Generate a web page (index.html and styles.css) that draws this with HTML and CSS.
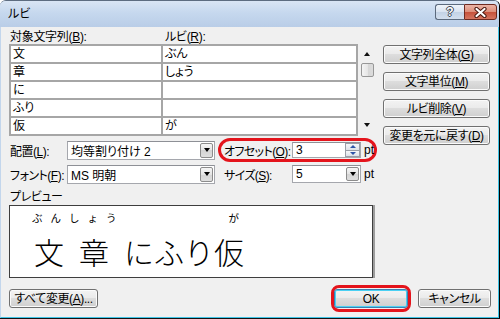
FILE: index.html
```html
<!DOCTYPE html>
<html lang="ja">
<head>
<meta charset="utf-8">
<title>ルビ</title>
<link rel="stylesheet" href="styles.css">
</head>
<body>
<div class="window">
  <div class="titlebar">
    <span class="title">ルビ</span>
    <div class="caps">
      <span class="cap help">?</span>
      <span class="cap close">
        <svg width="15" height="11" viewBox="0 0 15 11"><path d="M3.5 2 L11.5 9 M11.5 2 L3.5 9" stroke="#4a1810" stroke-width="4.2" stroke-linecap="round"/><path d="M3.5 2 L11.5 9 M11.5 2 L3.5 9" stroke="#fff" stroke-width="2.2" stroke-linecap="round"/></svg>
      </span>
    </div>
  </div>
  <div class="client">
    <div class="main">
      <div class="left">
        <div class="heads"><span class="h1">対象文字列(<u>B</u>):</span><span>ルビ(<u>R</u>):</span></div>
        <div class="listrow">
          <div class="grid">
            <div class="cell">文</div><div class="cell">ぶん</div>
            <div class="cell">章</div><div class="cell">しょう</div>
            <div class="cell">に</div><div class="cell"></div>
            <div class="cell">ふり</div><div class="cell"></div>
            <div class="cell">仮</div><div class="cell">が</div>
          </div>
          <div class="vscroll">
            <div class="sb-arrow up"><span class="tri-up"></span></div>
            <div class="thumb"></div>
            <div class="sb-fill"></div>
            <div class="sb-arrow down"><span class="tri-down"></span></div>
          </div>
        </div>
        <div class="frow first">
          <span class="flabel">配置(<u>L</u>):</span>
          <div class="combo"><span>均等割り付け 2</span><span class="ddbtn"></span></div>
          <div class="grp ring">
            <span class="glabel">オフセット(<u>O</u>):</span>
            <div class="spin"><span>3</span><span class="spinbtns"><span class="sbtn"><span class="btri-up"></span></span><span class="sbtn"><span class="btri-down"></span></span></span></div>
            <span class="pt">pt</span>
          </div>
        </div>
        <div class="frow">
          <span class="flabel">フォント(<u>F</u>):</span>
          <div class="combo"><span>MS 明朝</span><span class="ddbtn"></span></div>
          <div class="grp">
            <span class="glabel">サイズ(<u>S</u>):</span>
            <div class="combo small"><span>5</span><span class="ddbtn"></span></div>
            <span class="pt">pt</span>
          </div>
        </div>
        <div class="plabel">プレビュー</div>
        <div class="preview">
          <div class="ruby"><span class="r1">ぶんしょう</span><span class="r2">が</span></div>
          <div class="base"><span class="sp">文</span><span class="sp">章</span><span>にふり仮</span></div>
        </div>
      </div>
      <div class="right">
        <button class="btn">文字列全体(<u>G</u>)</button>
        <button class="btn">文字単位(<u>M</u>)</button>
        <button class="btn">ルビ削除(<u>V</u>)</button>
        <button class="btn">変更を元に戻す(<u>D</u>)</button>
      </div>
    </div>
    <div class="bottom">
      <button class="btn all">すべて変更(<u>A</u>)...</button>
      <span class="okring"><button class="btn ok">OK</button></span>
      <button class="btn cancel">キャンセル</button>
    </div>
  </div>
</div>
</body>
</html>
```
FILE: styles.css
```css
* { box-sizing: border-box; }
body {
  margin: 0;
  background: #fff;
  font-family: "Liberation Sans", "Noto Sans CJK JP", sans-serif;
  font-size: 12px;
  font-feature-settings: "palt";
  color: #000;
}
u { text-decoration: underline; text-underline-offset: 1px; }

.window {
  width: 500px;
  height: 319px;
  display: flex;
  flex-direction: column;
  border-top: 1px solid #5d6c80;
  border-right: 1px solid #000;
  border-bottom: 1px solid #111;
  border-radius: 6px 6px 0 0;
  background: #bfd3eb;
  overflow: hidden;
}

.titlebar {
  height: 26px;
  flex: none;
  display: flex;
  align-items: flex-start;
  justify-content: space-between;
  padding: 0 2px 0 8px;
  background: linear-gradient(#d9e5f4, #c6d8ee 45%, #b9cde7);
}
.title { margin-top: 6px; line-height: 14px; font-size: 12px; }
.caps { display: flex; margin-top: 3px; }
.cap {
  height: 16px;
  display: flex;
  align-items: center;
  justify-content: center;
  border: 1px solid #5c6a7d;
}
.help {
  width: 29px;
  border-right: none;
  border-radius: 3px 0 0 3px;
  background: linear-gradient(#f0f4fa, #d8e3f0 50%, #c3d2e5 50%, #d3dfee);
  color: #fff;
  font-weight: bold;
  font-size: 12px;
  line-height: 12px;
  text-shadow: 1px 0 #3d4552, -1px 0 #3d4552, 0 1px #3d4552, 0 -1px #3d4552;
}
.close {
  width: 33px;
  border-color: #6e2a20;
  border-radius: 0 3px 3px 0;
  background: linear-gradient(#ebb4a6, #dc8d79 50%, #c5503a 50%, #d47560);
}

.client {
  flex: 1;
  background: #f0f0f0;
  border-left: 1px solid #c3d6ec;
  border-right: 1px solid #3fc4e6;
  border-bottom: 1px solid #3fc4e6;
  padding: 3px 7px 0 8px;
  display: flex;
  flex-direction: column;
}

.main { display: flex; align-items: flex-start; }
.left { width: 368px; display: flex; flex-direction: column; }
.right {
  margin-left: 6px;
  width: 107px;
  padding-top: 15px;
  display: flex;
  flex-direction: column;
  gap: 8px;
}

.heads { height: 14px; line-height: 14px; display: flex; white-space: nowrap; letter-spacing: -0.3px; }
.heads .h1 { width: 156px; padding-left: 1px; }

.listrow { display: flex; height: 92px; }
.grid {
  width: 349px;
  display: grid;
  grid-template-columns: 150px 193px;
  grid-auto-rows: 16px;
  gap: 2px;
  padding: 1px;
  border: 1px solid #a6a6a6;
  background: #a6a6a6;
}
.cell { background: #fff; padding-left: 2px; line-height: 16px; }

.vscroll { width: 17px; display: flex; flex-direction: column; align-items: center; }
.sb-arrow { width: 17px; display: flex; justify-content: center; }
.sb-arrow.up { height: 19px; align-items: center; }
.sb-arrow.down { height: 17px; align-items: center; padding-bottom: 5px; }
.tri-up, .tri-down { width: 0; height: 0; border-left: 3.5px solid transparent; border-right: 3.5px solid transparent; }
.tri-up { border-bottom: 4px solid #111; }
.tri-down { border-top: 4px solid #111; }
.thumb {
  width: 13px;
  height: 14px;
  margin-left: 1px;
  border: 1px solid #979797;
  border-radius: 2px;
  background: linear-gradient(90deg, #f4f4f4, #e6e6e6 50%, #d6d6d6 50%, #dcdcdc);
}
.sb-fill { flex: 1; }

.btn {
  height: 19px;
  padding: 0;
  border: 1px solid #707070;
  border-radius: 3px;
  background: linear-gradient(#f3f3f3, #ebebeb 45%, #dddddd 50%, #cfcfcf);
  box-shadow: inset 0 0 0 1px #fbfbfb;
  font: inherit;
  font-feature-settings: "palt";
  letter-spacing: -0.4px;
  line-height: 16px;
  text-align: center;
  white-space: nowrap;
  color: #000;
}

.frow { display: flex; align-items: center; height: 24px; white-space: nowrap; }
.frow.first { margin-top: 2px; }
.flabel { flex: none; width: 58px; padding-left: 1px; letter-spacing: -0.5px; }
.combo {
  flex: none;
  width: 148px;
  height: 19px;
  border: 1px solid #a5a7ad;
  border-top-color: #8e9096;
  background: #fff;
  display: flex;
  align-items: center;
  justify-content: space-between;
  padding: 0 1px 0 3px;
}
.combo.small { width: 69px; height: 18px; }
.ddbtn {
  width: 13px;
  height: 15px;
  border: 1px solid #8c8c8c;
  border-radius: 2px;
  background: linear-gradient(#f6f6f6, #e4e4e4 50%, #d4d4d4 50%, #dedede);
  display: flex;
  align-items: center;
  justify-content: center;
}
.combo.small .ddbtn { height: 14px; }
.ddbtn::before {
  content: "";
  border-left: 3.5px solid transparent;
  border-right: 3.5px solid transparent;
  border-top: 4px solid #000;
}

.grp {
  flex: none;
  margin-left: 3px;
  height: 24px;
  border: 3px solid transparent;
  border-radius: 12px;
  padding-left: 3px;
  display: flex;
  align-items: center;
}
.grp.ring { border-color: #e4141c; }
.glabel { flex: none; width: 68px; letter-spacing: -0.6px; }
.spin {
  flex: none;
  width: 69px;
  height: 16px;
  border: 1px solid #a5a7ad;
  border-top-color: #8e9096;
  background: #fff;
  display: flex;
  align-items: center;
  justify-content: space-between;
  padding-left: 3px;
}
.spinbtns { display: flex; flex-direction: column; height: 14px; width: 15px; }
.sbtn {
  flex: 1;
  border: 1px solid #9a9ea8;
  background: linear-gradient(#f6f7f9, #dde1e8);
  display: flex;
  align-items: center;
  justify-content: center;
}
.sbtn + .sbtn { border-top: none; }
.btri-up, .btri-down { width: 0; height: 0; border-left: 3px solid transparent; border-right: 3px solid transparent; }
.btri-up { border-bottom: 3px solid #2f55a8; }
.btri-down { border-top: 3px solid #2f55a8; }
.pt { flex: none; margin-left: 3px; width: 10px; }

.plabel { margin-top: 4px; height: 14px; line-height: 14px; padding-left: 1px; letter-spacing: -0.4px; }
.preview {
  margin-top: 1px;
  width: 364px;
  height: 73px;
  background: #fff;
  border: 1px solid #3e3e3e;
  box-shadow: 2px 0 0 #9d9d9d;
  padding: 5px 0 0 22px;
  font-family: "Noto Sans CJK JP", sans-serif;
  font-feature-settings: normal;
  white-space: nowrap;
}
.ruby { display: flex; height: 13px; line-height: 13px; font-size: 10.5px; }
.r1 { letter-spacing: 8px; }
.r2 { margin-left: 104px; }
.base { display: flex; margin-top: 10px; padding-left: 2px; height: 34px; line-height: 34px; font-size: 30px; font-weight: 300; }
.base .sp { margin-right: 15px; }

.bottom { display: flex; align-items: center; margin-top: 7px; height: 27px; }
.btn.all { width: 89px; }
.okring {
  margin-left: auto;
  border: 3px solid #e4141c;
  border-radius: 8px;
  padding: 1px 0;
  display: flex;
}
.btn.ok {
  width: 74px;
  height: 19px;
  border-color: #3c7fb1;
  box-shadow: inset 0 0 0 1px #4ad0f3;
}
.btn.cancel { width: 73px; margin-left: 7px; }
```
